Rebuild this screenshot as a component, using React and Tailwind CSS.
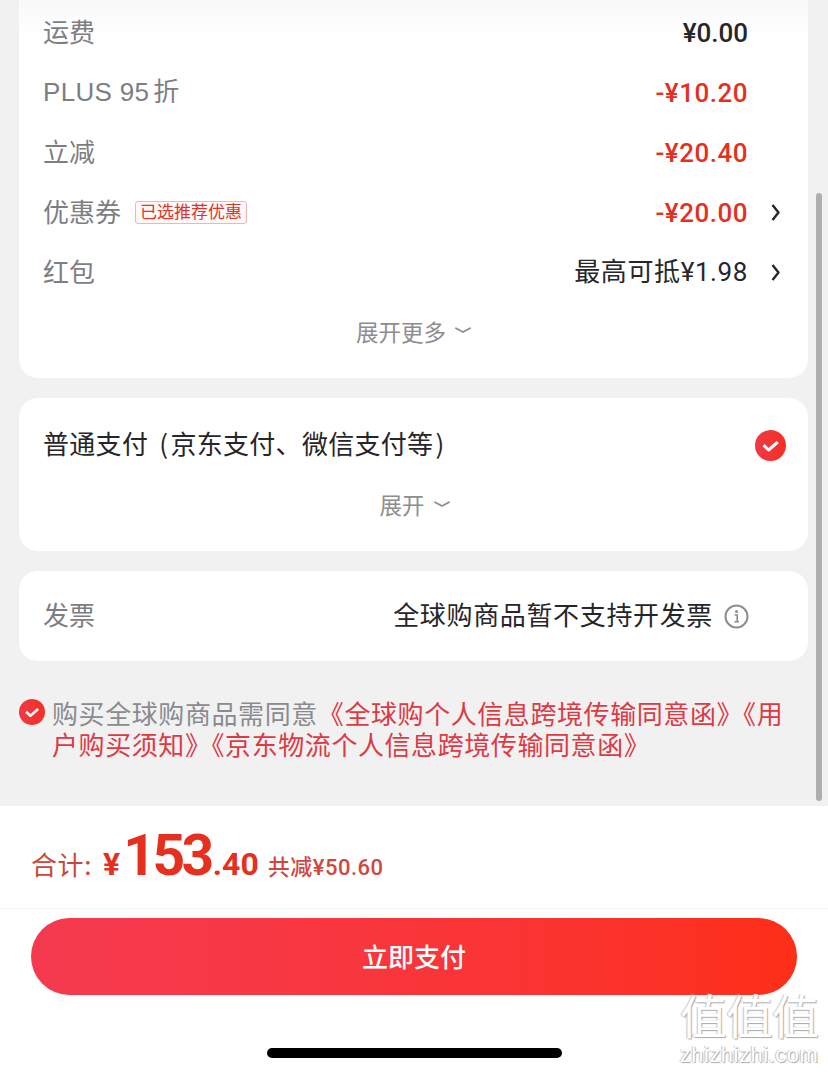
const cjk = "font-['Noto_Sans_CJK_SC','Noto_Sans',sans-serif]";

function Chevron() {
  return (
    <svg width="11" height="19" viewBox="0 0 11 19" fill="none" className="mb-[2px] shrink-0">
      <path d="M2.5 2 L8.5 9.5 L2.5 17" stroke="#26262a" strokeWidth="2.4" strokeLinejoin="round" />
    </svg>
  );
}

function SmallDown() {
  return (
    <svg width="16" height="7" viewBox="0 0 16 7" fill="none" className="ml-[9px] shrink-0">
      <path d="M1 1.2 L8 5 L15 1.2" stroke="#8d8d90" strokeWidth="1.8" strokeLinecap="round" strokeLinejoin="round" />
    </svg>
  );
}

function Check({ size }) {
  return (
    <svg width={size} height={size} viewBox="0 0 31 31" className="shrink-0">
      <defs>
        <linearGradient id={`g${size}`} x1="0" y1="0" x2="1" y2="0">
          <stop offset="0" stopColor="#ee3a45" />
          <stop offset="1" stopColor="#f52f25" />
        </linearGradient>
      </defs>
      <circle cx="15.5" cy="15.5" r="15.5" fill={`url(#g${size})`} />
      <path d="M8.5 15.2 L13.6 20 L22.8 12" stroke="#fff" strokeWidth="3" fill="none" strokeLinejoin="round" />
    </svg>
  );
}

function Row({ label, latin, tag, value, red, chevron, dark }) {
  return (
    <div className="flex h-[60px] items-center pl-6 pr-[27px]">
      <span className="mb-1 text-[26px] leading-[34px] text-[#7d7e82]">
        {latin && <span className="mr-[4px] font-['Liberation_Sans',sans-serif] tracking-[0.3px]">{latin}</span>}
        {label}
      </span>
      {tag && (
        <span className="mb-[2px] ml-[14px] flex h-[23px] w-[112px] items-center justify-center rounded-[3px] border border-[#efb7b0] bg-[#fff8f7] pb-[3px] text-[17px] leading-[20px] text-[#d9372c]">
          {tag}
        </span>
      )}
      <span
        className={`ml-auto text-[26px] leading-[34px] font-['Roboto','Noto_Sans_CJK_SC',sans-serif] ${
          red
            ? "font-medium tracking-[0.5px] text-[#e5301f]"
            : dark
              ? "mb-[2px] tracking-[0.6px] text-[#26262a]"
              : "font-medium text-[#26262a]"
        }`}
      >
        {value}
      </span>
      <span className="flex w-[33px] justify-end">{chevron ? <Chevron /> : null}</span>
    </div>
  );
}

export default function App() {
  return (
    <div className={`relative flex h-[1073px] w-[828px] flex-col overflow-hidden bg-white ${cjk}`}>
      <main className="flex h-[806px] shrink-0 flex-col bg-[#f1f1f2] pl-[19px] pr-5">
        <section className="rounded-b-[19px] bg-gradient-to-b from-[#f9f9f9] to-white to-[10%] pt-[3px]">
          <Row label="运费" value="¥0.00" />
          <Row latin="PLUS 95" label="折" value="-¥10.20" red />
          <Row label="立减" value="-¥20.40" red />
          <Row label="优惠券" tag="已选推荐优惠" value="-¥20.00" red chevron />
          <Row label="红包" value="最高可抵¥1.98" dark chevron />
          <div className="flex h-[60px] items-center justify-center pb-[5px] text-[22.5px] leading-[30px] text-[#8d8d90]">
            展开更多
            <SmallDown />
          </div>
          <div className="h-[15px]" />
        </section>

        <section className="mt-5 h-[153px] rounded-[19px] bg-white pl-6 pr-[22px]">
          <div className="flex h-[94px] items-center">
            <span className="mb-1 text-[26px] leading-[34px] tracking-[0.3px] text-[#26262a]">
              普通支付<span className="ml-[5px] mr-[2px]"> (</span>京东支付、微信支付等<span className="ml-[2px]">)</span>
            </span>
            <span className="ml-auto">
              <Check size={31} />
            </span>
          </div>
          <div className="flex h-[30px] -translate-y-[3px] items-center justify-center text-[22.5px] leading-[30px] text-[#8d8d90]">
            展开
            <SmallDown />
          </div>
        </section>

        <section className="mt-5 flex h-[90px] items-center rounded-[19px] bg-white pl-6 pr-[59px]">
          <span className="mb-1 text-[26px] leading-[34px] text-[#7d7e82]">发票</span>
          <span className="mb-1 ml-auto text-[26px] leading-[34px] tracking-[0.65px] text-[#26262a]">全球购商品暂不支持开发票</span>
          <svg width="25" height="25" viewBox="0 0 25 25" fill="none" className="ml-[11px] shrink-0">
            <circle cx="12.5" cy="12.5" r="11" stroke="#8d8d90" strokeWidth="2" />
            <circle cx="12.5" cy="7.6" r="1.5" fill="#8d8d90" />
            <path d="M10.6 11 H13.2 V17.6 M10.4 17.8 H15" stroke="#8d8d90" strokeWidth="1.6" />
          </svg>
        </section>

        <section className="mt-9 flex items-start">
          <span className="mt-[2px]">
            <Check size={26} />
          </span>
          <p className="ml-[7px] w-[735px] text-[26px] leading-[31px] tracking-[0.58px] text-[#dd3a44]">
            <span className="text-[#8a8b8f]">购买全球购商品需同意</span>
            《全球购个人信息跨境传输同意函》《用户购买须知》《京东物流个人信息跨境传输同意函》
          </p>
        </section>
      </main>

      <div className="flex h-[103px] shrink-0 items-baseline border-b border-[#f5f5f5] pl-[31px] pt-[15px] text-[#dc3a26]">
        <span className="text-[26px] leading-[70px] tracking-[0.6px] text-[#c9473a]">合计:</span>
        <span className="ml-[11px] text-[32px] font-bold leading-[70px] font-['Roboto',sans-serif] text-[#e5301f]">¥</span>
        <span className="ml-[3px] text-[57px] font-bold leading-[70px] tracking-[-3.5px] font-['Roboto',sans-serif] text-[#e5301f]">153</span>
        <span className="ml-[2px] text-[32px] font-bold leading-[70px] font-['Roboto',sans-serif] text-[#e5301f]">.40</span>
        <span className="ml-[9px] text-[22px] font-medium leading-[70px] tracking-[0.5px] text-[#d0483d] font-['Roboto','Noto_Sans_CJK_SC',sans-serif]">共减¥50.60</span>
      </div>

      <div className="flex flex-1 flex-col items-center">
        <button className="mt-[9px] flex h-[77px] w-[766px] items-center justify-center rounded-full bg-gradient-to-r from-[#f53a50] to-[#fe2f17] pb-[3px] text-[26px] font-medium text-white">
          立即支付
        </button>
        <div className="mt-[53px] h-[10px] w-[295px] rounded-full bg-black" />
      </div>

      <div className="absolute right-[6px] top-[193px] h-[608px] w-[6px] rounded-full bg-[#aeaeb0]" />

      <div className="absolute left-[674px] top-[985px] flex w-[150px] flex-col items-center text-white [text-shadow:1px_1px_1px_#a8a8a8,-1px_0_1px_#c4c4c4]">
        <span className="text-[47px] leading-[58px] tracking-[-1px]">值值值</span>
        <span className="text-[22px] leading-[24px] tracking-[0.5px] font-['Liberation_Sans',sans-serif]">zhizhizhi.com</span>
      </div>
    </div>
  );
}
